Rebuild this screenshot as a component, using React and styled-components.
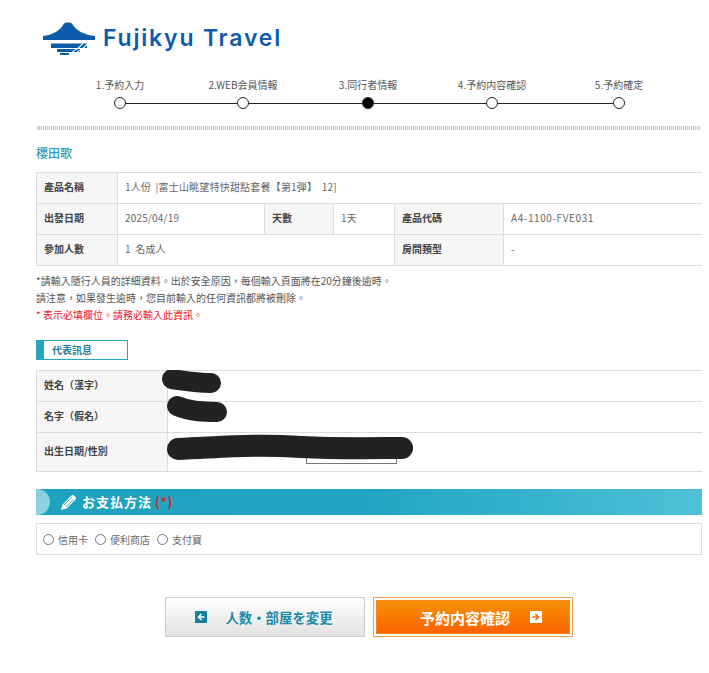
import React from "react";
import styled, { createGlobalStyle } from "styled-components";

const GlobalStyle = createGlobalStyle`
  html, body {
    margin: 0;
    padding: 0;
    background: #fff;
  }
  body {
    font-family: "Noto Sans CJK TC", "Noto Sans CJK JP", sans-serif;
    font-size: 10px;
    color: #555;
  }
`;

const Page = styled.div`
  width: 666px;
  height: 673px;
  padding-left: 36px;
  overflow: hidden;
`;

const Header = styled.header`
  display: flex;
  align-items: center;
  gap: 8px;
  height: 38px;
  padding: 19px 0 0 7px;
`;

const LogoText = styled.div`
  font-family: Inter, sans-serif;
  font-size: 23px;
  font-weight: 600;
  letter-spacing: 1.8px;
  line-height: 30px;
  color: #0d5cab;
`;

const Steps = styled.ol`
  position: relative;
  display: grid;
  grid-template-columns: 124px 122px 128px 120px 134px;
  width: 628px;
  margin: 21px 0 0 22px;
  padding: 0;
  list-style: none;
  &::before {
    content: "";
    position: absolute;
    left: 62px;
    right: 67px;
    bottom: 5px;
    height: 1px;
    background: #222;
  }
`;

const Step = styled.li`
  display: flex;
  flex-direction: column;
  align-items: center;
  gap: 5px;
  font-size: 10px;
  line-height: 14px;
  color: #555;
`;

const Dot = styled.span`
  position: relative;
  width: 10px;
  height: 10px;
  border: 1px solid #222;
  border-radius: 50%;
  background: ${(p) => (p.$active ? "#000" : "#fff")};
`;

const DottedBand = styled.div`
  height: 4px;
  margin: 17px 0 0 1px;
  width: 664px;
  background: repeating-linear-gradient(90deg, #c9c9c9 0 1px, #f2f2f2 1px 2px);
`;

const Title = styled.h2`
  margin: 14px 0 0;
  font-size: 12px;
  line-height: 17px;
  font-weight: 500;
  color: #1fa0bd;
`;

const Table = styled.table`
  width: 666px;
  table-layout: fixed;
  border-collapse: collapse;
  margin-top: ${(p) => p.$top || 0}px;
  font-size: 10px;
`;

const Th = styled.th`
  height: 26px;
  padding: 0 0 4px 7px;
  border: 1px solid #ddd;
  background: #f6f6f6;
  text-align: left;
  font-weight: 700;
  color: #444;
`;

const Td = styled.td`
  padding: 0 0 4px 7px;
  border: 1px solid #ddd;
  color: #666;
  word-spacing: 2px;
  letter-spacing: ${(p) => (p.$wide ? "0.6px" : "0.2px")};
`;

const Notes = styled.div`
  margin-top: 6px;
  font-size: 10px;
  line-height: 17px;
  color: #555;
`;

const RedNote = styled.div`
  color: #f0102a;
`;

const SectionTag = styled.div`
  box-sizing: border-box;
  width: 92px;
  height: 20px;
  margin-top: 17px;
  padding-left: 8px;
  border: 1px solid #29a5c2;
  border-left-width: 8px;
  font-size: 10px;
  font-weight: 700;
  line-height: 17px;
  color: #1d7e98;
`;

const MemberWrap = styled.div`
  position: relative;
  margin-top: 10px;
`;

const SelectBox = styled.div`
  box-sizing: border-box;
  width: 91px;
  height: 22px;
  margin: 9px 0 3px 131px;
  border: 1px solid #777;
`;

const Scribble = styled.svg`
  position: absolute;
  left: 0;
  top: 0;
  pointer-events: none;
`;

const PayHeader = styled.div`
  display: flex;
  align-items: center;
  gap: 5px;
  height: 26px;
  margin-top: 17px;
  background: linear-gradient(90deg, #1fa2bf 0%, #22a5c2 50%, #4dc1d7 100%);
  overflow: hidden;
  &::before {
    content: "";
    width: 14px;
    height: 26px;
    border-radius: 0 13px 13px 0;
    background: #8bd2e0;
    margin-right: 5px;
  }
`;

const PayTitle = styled.h3`
  margin: 0;
  padding-bottom: 1px;
  font-size: 13px;
  font-weight: 700;
  letter-spacing: 1px;
  color: #fff;
  & em {
    margin-left: 3px;
    font-style: normal;
    letter-spacing: 0.5px;
    color: #d9262c;
  }
`;

const PayBox = styled.div`
  display: flex;
  align-items: center;
  box-sizing: border-box;
  height: 32px;
  margin-top: 8px;
  padding-left: 6px;
  gap: 7px;
  border: 1px solid #ddd;
`;

const RadioLabel = styled.label`
  display: flex;
  align-items: center;
  gap: 4px;
  font-size: 10px;
  color: #666;
`;

const Radio = styled.input`
  width: 11px;
  height: 11px;
  margin: 0;
`;

const Actions = styled.div`
  display: flex;
  gap: 8px;
  margin: 42px 0 0 129px;
`;

const BackButton = styled.button`
  display: flex;
  align-items: center;
  justify-content: center;
  gap: 18px;
  box-sizing: border-box;
  width: 200px;
  height: 40px;
  padding: 0 2px 0 0;
  border: 1px solid #ccc;
  background: linear-gradient(180deg, #fff 0%, #e2e2e2 100%);
  font-family: inherit;
  font-size: 13.4px;
  font-weight: 700;
  color: #1c88a8;
`;

const NextButton = styled.button`
  display: block;
  box-sizing: border-box;
  width: 200px;
  height: 40px;
  padding: 2px;
  border: 1px solid #f9a04a;
  background: #fff;
  font-family: inherit;
  font-size: 15px;
  font-weight: 700;
  color: #fff;
`;

const NextInner = styled.span`
  display: flex;
  align-items: center;
  justify-content: center;
  gap: 20px;
  height: 100%;
  padding-left: 16px;
  box-sizing: border-box;
  border: 1px solid #f7862a;
  background: linear-gradient(180deg, #f79200 0%, #fb6200 100%);
`;

const ArrowBox = styled.span`
  display: flex;
  align-items: center;
  justify-content: center;
  width: 12px;
  height: 12px;
  background: ${(p) => (p.$light ? "#fff" : "#14819f")};
`;

function Logo() {
  return (
    <svg width="52" height="33" viewBox="0 0 52 33" aria-hidden="true">
      <path
        d="M0 14C9 13 17 9 21 1.5C22 0 28 0 29 1.5C33 9 42 13 52 14L52 18L0 18Z"
        fill="#0d5cab"
      />
      <path d="M8 21.5H44V26H8Z M14 27H37V30H14Z M17 31H26V33.5H17Z" fill="#0d5cab" />
      <path
        d="M26 33.5C29 31 30 28.5 33 27.5C36 26.5 37 24 40 21.5M31 33.5C34 31 35 28.5 38 27.5C41 26.5 42 24 45 21.5"
        fill="none"
        stroke="#fff"
        strokeWidth="1.1"
      />
    </svg>
  );
}

function Pencil() {
  return (
    <svg width="17" height="17" viewBox="0 0 17 17" aria-hidden="true">
      <path d="M1 16L2.5 10.5L11.5 1.5C12.5 0.8 13.5 1 14.5 2L15.5 3C16.2 4 16.2 4.8 15.5 5.5L6.5 14.5Z" fill="#fff" />
      <path d="M3.8 11.2L11.8 3.2M5.8 13.2L13.8 5.2" stroke="#22a5c2" strokeWidth="0.8" />
    </svg>
  );
}

function Arrow({ color, flip }) {
  return (
    <svg width="8" height="8" viewBox="0 0 8 8" aria-hidden="true">
      <path
        d={flip ? "M7.5 4H2M4.5 1L1.5 4L4.5 7" : "M0.5 4H6M3.5 1L6.5 4L3.5 7"}
        fill="none"
        stroke={color}
        strokeWidth="1.6"
      />
    </svg>
  );
}

const steps = ["1.予約入力", "2.WEB会員情報", "3.同行者情報", "4.予約内容確認", "5.予約確定"];

export default function App() {
  return (
    <Page>
      <GlobalStyle />
      <Header>
        <Logo />
        <LogoText>Fujikyu Travel</LogoText>
      </Header>

      <Steps>
        {steps.map((s, i) => (
          <Step key={s}>
            {s}
            <Dot $active={i === 2} />
          </Step>
        ))}
      </Steps>
      <DottedBand />

      <Title>櫻田歌</Title>
      <Table $top={11}>
        <colgroup>
          <col width="81" />
          <col width="147" />
          <col width="69" />
          <col width="61" />
          <col width="109" />
          <col width="199" />
        </colgroup>
        <tbody>
          <tr>
            <Th>產品名稱</Th>
            <Td colSpan={5}>1人份 |富士山眺望特快甜點套餐【第1弾】 12]</Td>
          </tr>
          <tr>
            <Th>出發日期</Th>
            <Td>2025/04/19</Td>
            <Th>天數</Th>
            <Td>1天</Td>
            <Th>產品代碼</Th>
            <Td $wide>A4-1100-FVE031</Td>
          </tr>
          <tr>
            <Th>參加人數</Th>
            <Td colSpan={3}>1 名成人</Td>
            <Th>房間類型</Th>
            <Td>-</Td>
          </tr>
        </tbody>
      </Table>

      <Notes>
        <div>*請輸入隨行人員的詳細資料。出於安全原因，每個輸入頁面將在20分鐘後逾時。</div>
        <div>請注意，如果發生逾時，您目前輸入的任何資訊都將被刪除。</div>
        <RedNote>* 表示必填欄位。請務必輸入此資訊。</RedNote>
      </Notes>

      <SectionTag>代表訊息</SectionTag>
      <MemberWrap>
        <Table>
          <colgroup>
            <col width="131" />
            <col width="535" />
          </colgroup>
          <tbody>
            <tr>
              <Th>姓名（漢字）</Th>
              <Td />
            </tr>
            <tr>
              <Th>名字（假名）</Th>
              <Td />
            </tr>
            <tr>
              <Th>出生日期/性別</Th>
              <Td>
                <SelectBox />
              </Td>
            </tr>
          </tbody>
        </Table>
        <Scribble width="400" height="102" viewBox="0 0 400 102" aria-hidden="true">
          <g fill="none" stroke="#222" strokeLinecap="round" strokeLinejoin="round">
            <path d="M136 9C150 11 160 13 175 13" strokeWidth="20" />
            <path d="M141 36C155 42 170 42 181 42" strokeWidth="20" />
            <path d="M142 79C190 77 220 74 265 77C305 79 345 78 366 78" strokeWidth="22" />
          </g>
        </Scribble>
      </MemberWrap>

      <PayHeader>
        <Pencil />
        <PayTitle>
          お支払方法<em>(*)</em>
        </PayTitle>
      </PayHeader>
      <PayBox>
        <RadioLabel>
          <Radio type="radio" name="pay" />
          信用卡
        </RadioLabel>
        <RadioLabel>
          <Radio type="radio" name="pay" />
          便利商店
        </RadioLabel>
        <RadioLabel>
          <Radio type="radio" name="pay" />
          支付寶
        </RadioLabel>
      </PayBox>

      <Actions>
        <BackButton type="button">
          <ArrowBox>
            <Arrow color="#fff" flip />
          </ArrowBox>
          人数・部屋を変更
        </BackButton>
        <NextButton type="button">
          <NextInner>
            予約内容確認
            <ArrowBox $light>
              <Arrow color="#f26a00" />
            </ArrowBox>
          </NextInner>
        </NextButton>
      </Actions>
    </Page>
  );
}
